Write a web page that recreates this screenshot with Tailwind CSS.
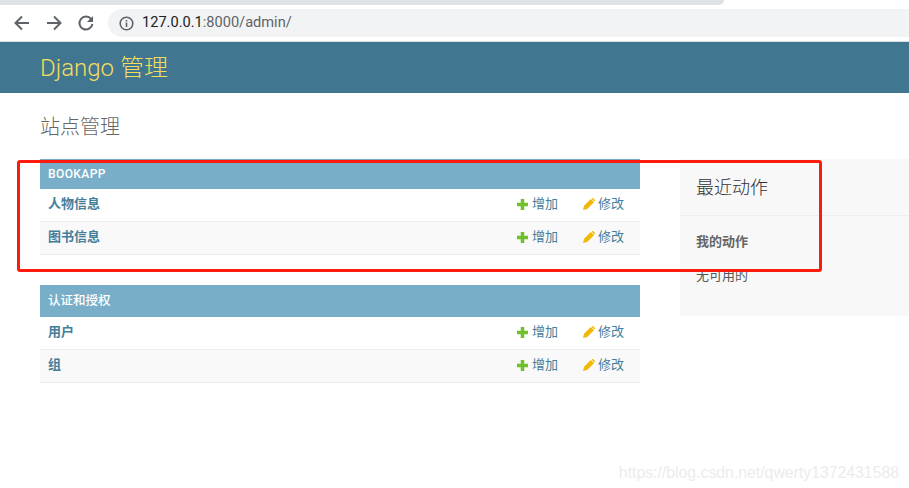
<!DOCTYPE html>
<html lang="zh">
<head>
    <meta charset="UTF-8">
    <title>站点管理</title>
    <script src="https://cdn.jsdelivr.net/npm/@tailwindcss/browser@4"></script>
</head>
<body class="bg-white font-['Roboto','Noto_Sans_CJK_SC',sans-serif] text-[#333] overflow-hidden">
<div class="relative w-[909px] h-[488px] overflow-hidden">
    <!-- browser chrome -->
    <div class="h-[5px] w-[724px] bg-[#dee1e6] rounded-br-md"></div>
    <div class="h-[36px] flex items-center">
        <div class="w-[108px] flex items-center pl-[13px] gap-[14px] text-[#5f6368]">
            <svg class="w-[18px] h-[18px]" viewBox="0 0 18 18" fill="none" stroke="currentColor" stroke-width="2"><path d="M16 9H3M9 2.500 2.500 9 9 15.500"/></svg>
            <svg class="w-[18px] h-[18px]" viewBox="0 0 18 18" fill="none" stroke="currentColor" stroke-width="2"><path d="M2 9h13M9 2.500 15.500 9 9 15.500"/></svg>
            <svg class="w-[18px] h-[18px]" viewBox="0 0 18 18" fill="none"><path d="M14.200 5.200A6.500 6.500 0 1 0 15.400 10" stroke="currentColor" stroke-width="2"/><path d="M16 2v6h-6z" fill="currentColor"/></svg>
        </div>
        <div class="flex-1 h-[28px] bg-[#f1f3f4] rounded-l-[14px] flex items-center pl-[11px]">
            <svg class="w-[15px] h-[15px] text-[#5f6368]" viewBox="0 0 15 15" fill="none"><circle cx="7.500" cy="7.500" r="6.300" stroke="currentColor" stroke-width="1.600"/><path d="M6.700 6.500h1.600v4.500H6.700zM6.700 3.900h1.600v1.600H6.700z" fill="currentColor"/></svg>
            <span class="ml-[8px] text-[14.600px] text-[#5f6368]"><span class="text-[#202124]">127.0.0.1</span>:8000/admin/</span>
        </div>
    </div>
    <div class="h-px bg-[#dadce0]"></div>

    <!-- django header -->
    <header class="h-[51px] bg-[#417690] flex items-center pl-[40px]">
        <h1 class="text-[24px] font-light text-[#f5dd5d]">Django 管理</h1>
    </header>

    <main class="pl-[40px] pt-[20px]">
        <h2 class="text-[20px] leading-[28px] font-light text-[#666] mb-[18px]">站点管理</h2>
        <div class="flex">
            <div class="w-[600px] shrink-0">
                <section class="mb-[30px]">
                    <div class="h-[30px] bg-[#79aec8] text-white text-[12px] font-medium tracking-[0.4px] flex items-center px-[8px]">BOOKAPP</div>
                    <div class="h-[33px] pb-[2px] bg-white border-b border-[#eee] flex items-center pl-[8px] pr-[16px] text-[13px]">
                        <span class="flex-1 font-bold text-[#447e9b]">人物信息</span>
                        <span class="flex items-center text-[#447e9b] w-[66px]"><svg class="w-[11px] h-[11px] mr-[4px]" viewBox="0 0 10 10"><path d="M3.400 0h3.200v3.400H10v3.200H6.600V10H3.400V6.600H0V3.400h3.400z" fill="#70bf2b"/></svg>增加</span>
                        <span class="flex items-center text-[#447e9b]"><svg class="w-[12px] h-[12px] mr-[3px]" viewBox="0 0 12 12"><path d="M0 12l1-4.200L7.800 1 11 4.200 4.200 11zM8.700.4a1.200 1.200 0 0 1 1.700 0l1.200 1.200a1.200 1.200 0 0 1 0 1.700l-.2.200L8.500.6z" fill="#efb80b"/></svg>修改</span>
                    </div>
                    <div class="h-[33px] pb-[2px] bg-[#f9f9f9] border-b border-[#eee] flex items-center pl-[8px] pr-[16px] text-[13px]">
                        <span class="flex-1 font-bold text-[#447e9b]">图书信息</span>
                        <span class="flex items-center text-[#447e9b] w-[66px]"><svg class="w-[11px] h-[11px] mr-[4px]" viewBox="0 0 10 10"><path d="M3.400 0h3.200v3.400H10v3.200H6.600V10H3.400V6.600H0V3.400h3.400z" fill="#70bf2b"/></svg>增加</span>
                        <span class="flex items-center text-[#447e9b]"><svg class="w-[12px] h-[12px] mr-[3px]" viewBox="0 0 12 12"><path d="M0 12l1-4.200L7.800 1 11 4.200 4.200 11zM8.700.4a1.200 1.200 0 0 1 1.700 0l1.200 1.200a1.200 1.200 0 0 1 0 1.700l-.2.200L8.500.6z" fill="#efb80b"/></svg>修改</span>
                    </div>
                </section>
                <section>
                    <div class="h-[32px] pt-px bg-[#79aec8] text-white text-[12.500px] font-medium flex items-center px-[8px]">认证和授权</div>
                    <div class="h-[33px] pb-[2px] bg-white border-b border-[#eee] flex items-center pl-[8px] pr-[16px] text-[13px]">
                        <span class="flex-1 font-bold text-[#447e9b]">用户</span>
                        <span class="flex items-center text-[#447e9b] w-[66px]"><svg class="w-[11px] h-[11px] mr-[4px]" viewBox="0 0 10 10"><path d="M3.400 0h3.200v3.400H10v3.200H6.600V10H3.400V6.600H0V3.400h3.400z" fill="#70bf2b"/></svg>增加</span>
                        <span class="flex items-center text-[#447e9b]"><svg class="w-[12px] h-[12px] mr-[3px]" viewBox="0 0 12 12"><path d="M0 12l1-4.200L7.800 1 11 4.200 4.200 11zM8.700.4a1.200 1.200 0 0 1 1.700 0l1.200 1.200a1.200 1.200 0 0 1 0 1.700l-.2.200L8.500.6z" fill="#efb80b"/></svg>修改</span>
                    </div>
                    <div class="h-[33px] pb-[2px] bg-[#f9f9f9] border-b border-[#eee] flex items-center pl-[8px] pr-[16px] text-[13px]">
                        <span class="flex-1 font-bold text-[#447e9b]">组</span>
                        <span class="flex items-center text-[#447e9b] w-[66px]"><svg class="w-[11px] h-[11px] mr-[4px]" viewBox="0 0 10 10"><path d="M3.400 0h3.200v3.400H10v3.200H6.600V10H3.400V6.600H0V3.400h3.400z" fill="#70bf2b"/></svg>增加</span>
                        <span class="flex items-center text-[#447e9b]"><svg class="w-[12px] h-[12px] mr-[3px]" viewBox="0 0 12 12"><path d="M0 12l1-4.200L7.800 1 11 4.200 4.200 11zM8.700.4a1.200 1.200 0 0 1 1.700 0l1.200 1.200a1.200 1.200 0 0 1 0 1.700l-.2.200L8.500.6z" fill="#efb80b"/></svg>修改</span>
                    </div>
                </section>
            </div>
            <aside class="ml-[40px] w-[229px] shrink-0 h-[157px] bg-[#f8f8f8]">
                <div class="h-[57px] border-b border-[#eee] pt-px flex items-center px-[16px] text-[18px] font-light text-[#333]">最近动作</div>
                <div class="px-[16px] pt-[17px] text-[13px]">
                    <h3 class="font-bold text-[#666] leading-[18px] mb-[16px]">我的动作</h3>
                    <p class="text-[#555] leading-[18px]">无可用的</p>
                </div>
            </aside>
        </div>
    </main>

    <!-- annotation and watermark lie over the page -->
    <div class="absolute left-[17px] top-[160px] w-[805px] h-[112px] border-[3px] border-[#ff1a0e] rounded-[3px]"></div>
    <div class="absolute right-[10px] top-[461px] text-[15.800px] font-['Liberation_Sans',sans-serif] text-[#ececec]">https://blog.csdn.net/qwerty1372431588</div>
</div>
</body>
</html>
